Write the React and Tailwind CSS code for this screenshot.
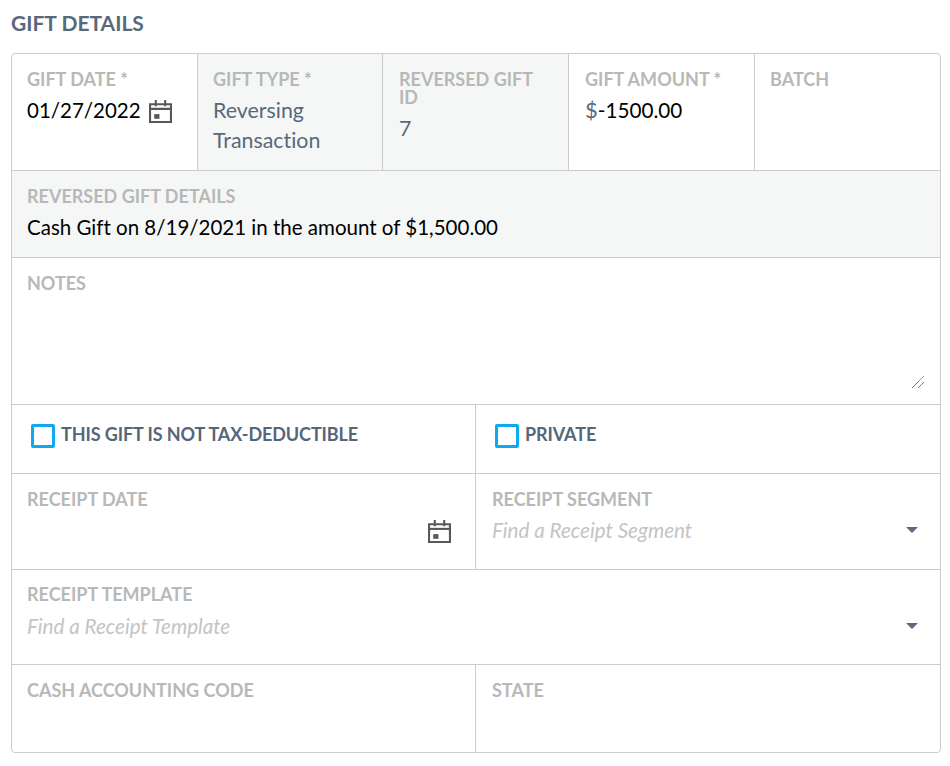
const CalendarIcon = ({ size = 22 }) => (
  <svg viewBox="0 0 22 22" width={size} height={size} className="shrink-0" fill="none">
    <path d="M1 4h20v17H1z" stroke="#55595c" strokeWidth="2" />
    <path d="M1 8.5h20" stroke="#55595c" strokeWidth="2" />
    <path d="M6.5 0v6M15.5 0v6" stroke="#55595c" strokeWidth="2" />
    <rect x="5" y="13.5" width="5" height="4.5" fill="#55595c" />
  </svg>
);

const Caret = () => (
  <div className="w-0 h-0 border-x-[6px] border-x-transparent border-t-[6px] border-t-[#5b6b7b]" />
);

const Label = ({ children, className = "" }) => (
  <div className={`text-[18px] leading-[18px] font-bold text-[#b8b8b8] ${className}`}>
    {children}
  </div>
);

function Checkbox({ label }) {
  return (
    <div className="flex items-center gap-[6px]">
      <div className="w-6 h-6 rounded-[2px] border-[3px] border-[#0fa9f0] bg-white" />
      <span className="text-[18px] font-bold text-[#55667a] tracking-[-0.1px] leading-[24px] -mt-[5px]">{label}</span>
    </div>
  );
}

export default function App() {
  return (
    <div className="w-[950px] h-[766px] bg-white font-['Lato','Open_Sans',sans-serif] [font-variant-ligatures:none] px-[11px] overflow-hidden">
      <h2 className="h-[53px] pt-[9px] text-[21px] leading-[28px] font-bold text-[#58697a]">GIFT DETAILS</h2>

      <div className="w-[930px] border border-[#cccccc] rounded-[4px] overflow-hidden">
        {/* top row */}
        <div className="grid grid-cols-[186px_185px_186px_186px_1fr] h-[117px] border-b border-[#cccccc]">
          <div className="border-r border-[#cccccc] pl-[15px] pt-[16px]">
            <Label>GIFT DATE *</Label>
            <div className="flex items-center gap-[8px] mt-[7px] text-[20.5px] leading-[30px] text-black">
              01/27/2022
              <div className="mt-[2px]"><CalendarIcon size={23} /></div>
            </div>
          </div>
          <div className="border-r border-[#cccccc] bg-[#f5f7f6] pl-[15px] pt-[16px]">
            <Label>GIFT TYPE *</Label>
            <div className="mt-[7px] text-[21.4px] leading-[30px] text-[#58697a]">Reversing Transaction</div>
          </div>
          <div className="border-r border-[#cccccc] bg-[#f5f7f6] pl-[16px] pr-[20px] pt-[16px]">
            <Label>REVERSED GIFT ID</Label>
            <div className="mt-[7px] text-[21.4px] leading-[30px] text-[#58697a]">7</div>
          </div>
          <div className="border-r border-[#cccccc] pl-[16px] pt-[16px]">
            <Label>GIFT AMOUNT *</Label>
            <div className="mt-[7px] text-[20.7px] leading-[30px] text-black"><span className="text-[22px] text-[#58697a]">$</span>-1500.00</div>
          </div>
          <div className="pl-[15px] pt-[16px]">
            <Label>BATCH</Label>
          </div>
        </div>

        {/* reversed gift details */}
        <div className="h-[87px] bg-[#f5f7f6] border-b border-[#cccccc] pl-[15px] pt-[16px]">
          <Label>REVERSED GIFT DETAILS</Label>
          <div className="mt-[7px] text-[20.5px] leading-[30px] text-black">Cash Gift on 8/19/2021 in the amount of $1,500.00</div>
        </div>

        {/* notes */}
        <div className="relative h-[147px] border-b border-[#cccccc] pl-[15px] pt-[16px]">
          <Label>NOTES</Label>
          <svg className="absolute right-[15px] bottom-[15px]" width="14" height="14" viewBox="0 0 14 14">
            <path d="M1 13L13 1M7 13L13 7" stroke="#444" strokeWidth="1" strokeDasharray="1 0.5" />
          </svg>
        </div>

        {/* checkboxes */}
        <div className="grid grid-cols-2 h-[69px] border-b border-[#cccccc]">
          <div className="border-r border-[#cccccc] pl-[19px] pt-[19px]">
            <Checkbox label="THIS GIFT IS NOT TAX-DEDUCTIBLE" />
          </div>
          <div className="pl-[19px] pt-[19px]">
            <Checkbox label="PRIVATE" />
          </div>
        </div>

        {/* receipt date + segment */}
        <div className="grid grid-cols-2 h-[96px] border-b border-[#cccccc]">
          <div className="border-r border-[#cccccc] pl-[15px] pr-[24px] pt-[16px]">
            <Label>RECEIPT DATE</Label>
            <div className="flex justify-end mt-[12px]"><CalendarIcon size={23} /></div>
          </div>
          <div className="pl-[16px] pr-[22px] pt-[16px]">
            <Label>RECEIPT SEGMENT</Label>
            <div className="flex items-center justify-between mt-[7px]">
              <span className="text-[20.65px] leading-[30px] italic text-[#c4c4c4]">Find a Receipt Segment</span>
              <Caret />
            </div>
          </div>
        </div>

        {/* template */}
        <div className="h-[95px] border-b border-[#cccccc] pl-[15px] pr-[22px] pt-[15px]">
          <Label>RECEIPT TEMPLATE</Label>
          <div className="flex items-center justify-between mt-[8px]">
            <span className="text-[20.65px] leading-[30px] italic text-[#c4c4c4]">Find a Receipt Template</span>
            <Caret />
          </div>
        </div>

        {/* cash code + state */}
        <div className="grid grid-cols-2 h-[87px]">
          <div className="border-r border-[#cccccc] pl-[15px] pt-[16px]">
            <Label>CASH ACCOUNTING CODE</Label>
          </div>
          <div className="pl-[16px] pt-[16px]">
            <Label>STATE</Label>
          </div>
        </div>
      </div>
    </div>
  );
}
